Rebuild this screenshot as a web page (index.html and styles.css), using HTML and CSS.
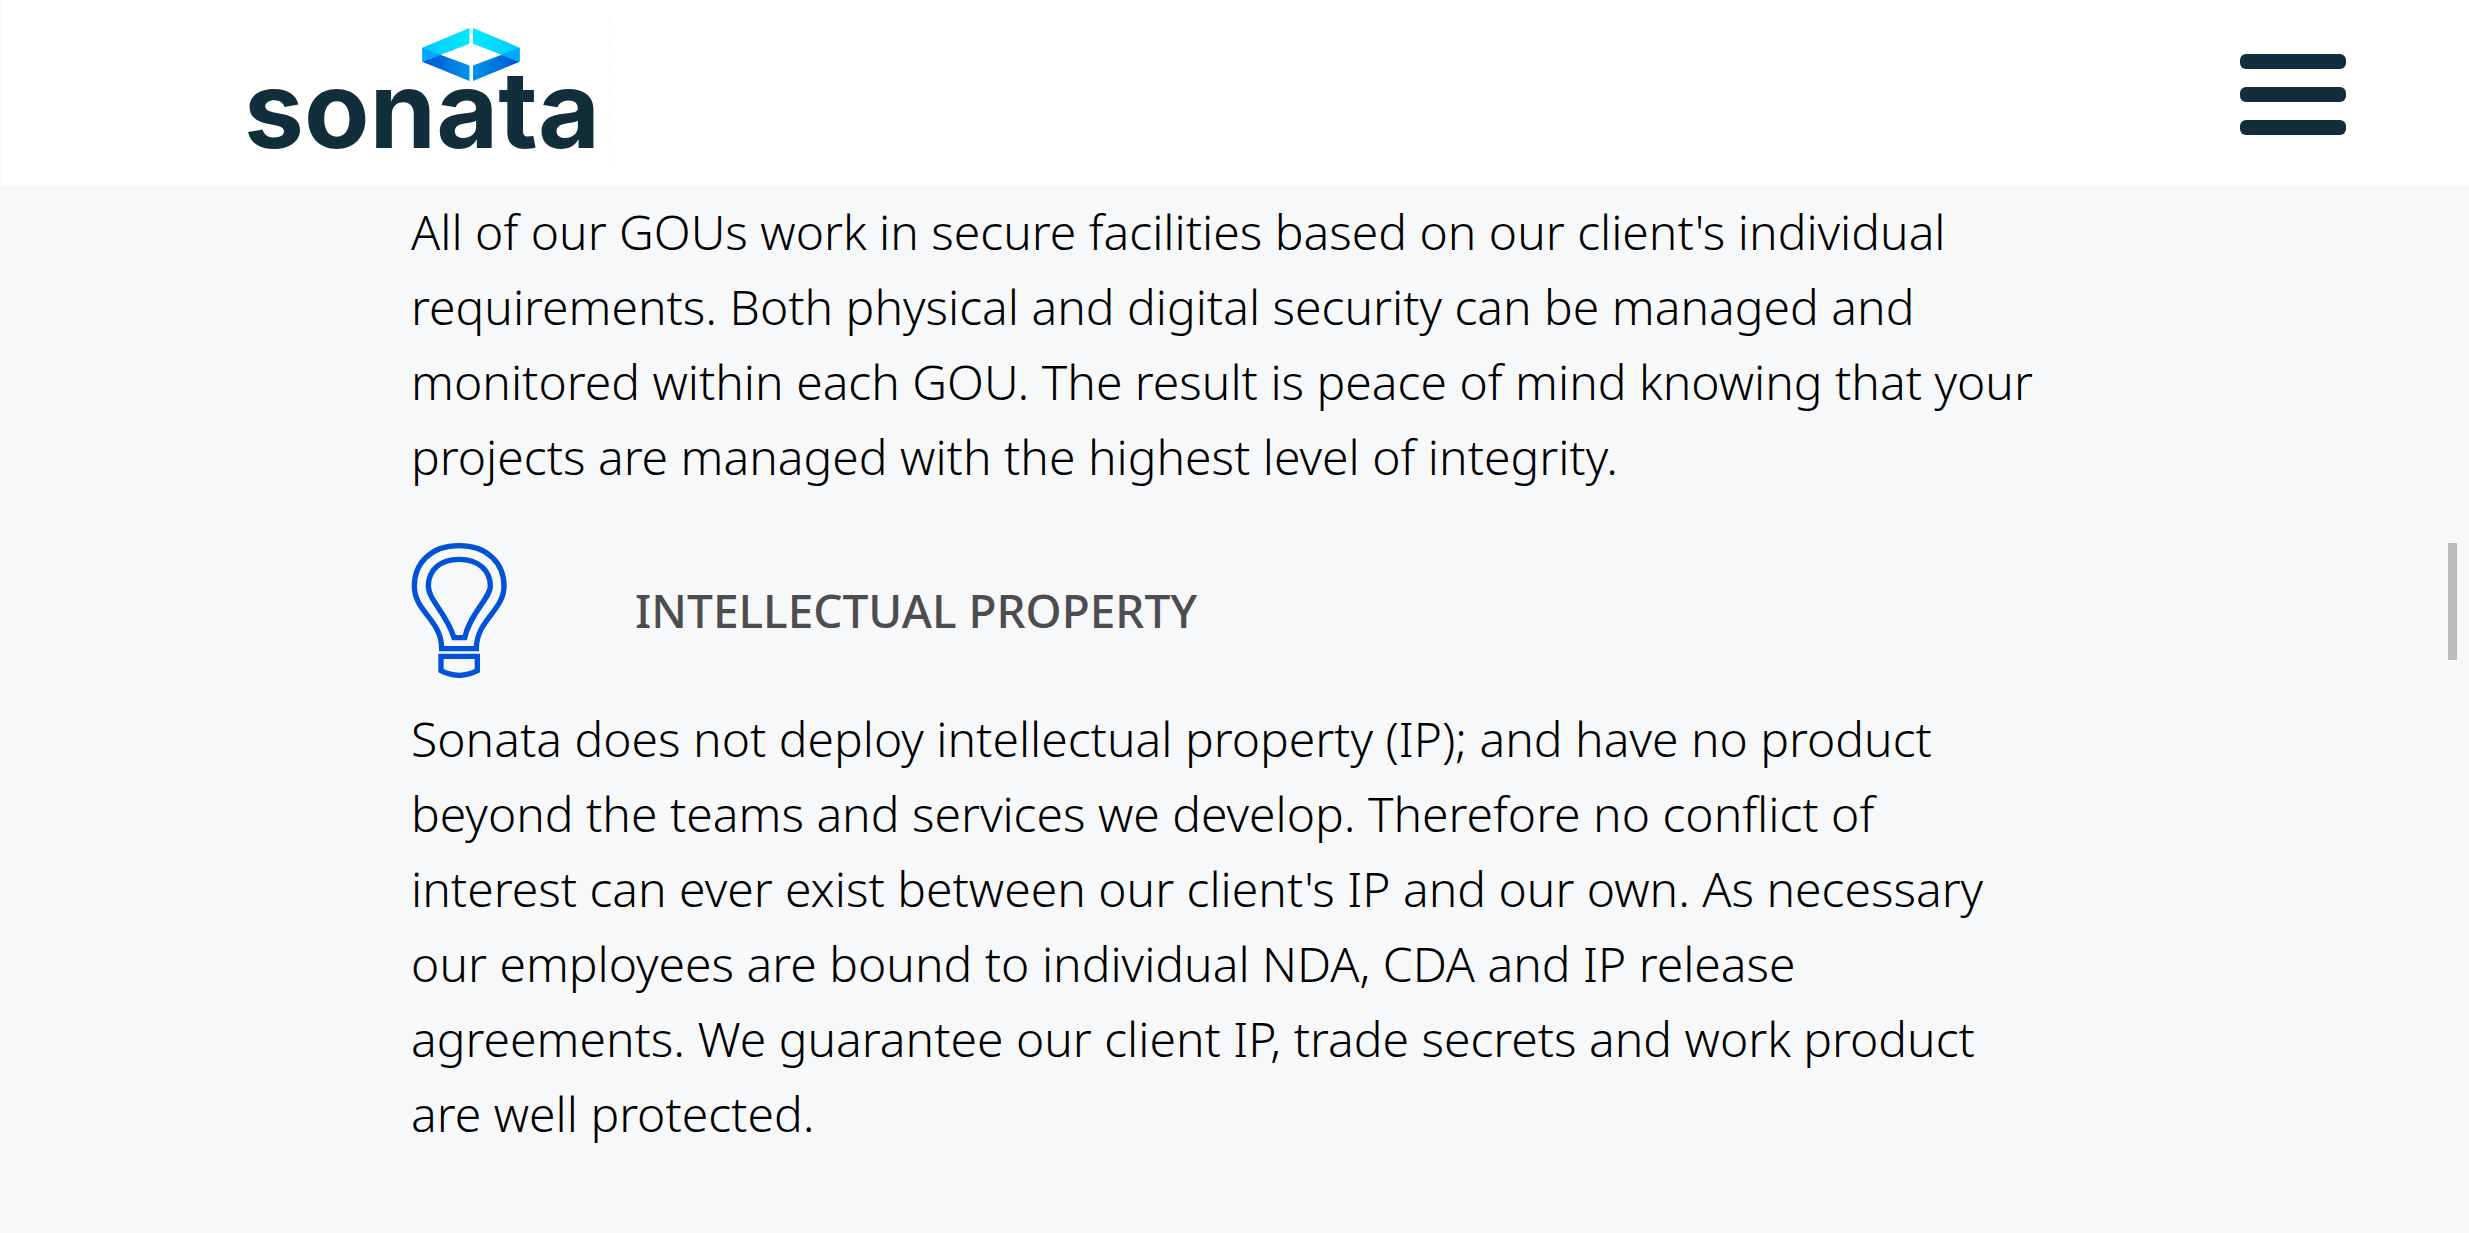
FILE: index.html
```
<!DOCTYPE html>
<html lang="en">
<head>
<meta charset="utf-8">
<meta name="viewport" content="width=device-width, initial-scale=1">
<title>Sonata – Security and Intellectual Property</title>
<link rel="stylesheet" href="styles.css">
</head>
<body>
<header class="site-header">
  <a class="logo" href="#" aria-label="Sonata home">
    <svg class="logo-art" viewBox="238 16 374 156" role="img" aria-label="sonata">
      <defs>
        <linearGradient id="top-left" x1="0" x2="1"><stop offset="0" stop-color="#00c8ff"/><stop offset="1" stop-color="#00eaff"/></linearGradient>
        <linearGradient id="top-right" x1="1" x2="0"><stop offset="0" stop-color="#00c8ff"/><stop offset="1" stop-color="#00eaff"/></linearGradient>
        <linearGradient id="low-left" x1="0" x2="1"><stop offset="0" stop-color="#0052d6"/><stop offset="1" stop-color="#0095e8"/></linearGradient>
        <linearGradient id="low-right" x1="1" x2="0"><stop offset="0" stop-color="#0052d6"/><stop offset="1" stop-color="#0095e8"/></linearGradient>
      </defs>
      <path fill="url(#top-left)" d="M469.500 28V43.700L422.300 61.700V47.700Z"/>
      <path fill="url(#low-left)" d="M422.300 61.700L440.300 54.700L469.500 65.500V81Z"/>
      <path fill="#00a8ff" d="M422.300 47.700L440.300 54.700L422.300 61.700Z"/>
      <path fill="url(#top-right)" d="M473 28V43.700L519.700 61.700V47.700Z"/>
      <path fill="url(#low-right)" d="M519.700 61.700L501.700 54.700L473 65.500V81Z"/>
      <path fill="#00a8ff" d="M519.700 47.700L501.700 54.700L519.700 61.700Z"/>
      <text class="wordmark" x="244" y="148">sonata</text>
      <path d="M610 16V165" stroke="#f1f1f1" stroke-width="2" stroke-dasharray="1 5"/>
    </svg>
  </a>
  <button class="menu-button" type="button" aria-label="Open menu">
    <span class="menu-bar"></span>
    <span class="menu-bar"></span>
    <span class="menu-bar"></span>
  </button>
</header>
<main class="content">
  <p class="copy">All of our GOUs work in secure facilities based on our client's individual requirements. Both physical and digital security can be managed and monitored within each GOU. The result is peace of mind knowing that your projects are managed with the highest level of integrity.</p>
  <div class="topic">
    <svg class="topic-icon" viewBox="63 69 288 405" aria-hidden="true">
      <path d="M155 386C155 298 73 276 73 198C73 130 122 77 207 77C293 77 342 130 342 198C342 272 259 300 259 386Z"/>
      <path d="M192 353C170 280 115 240 115 198C115 150 150 118 207 118C265 118 301 150 301 198C301 234 240 280 224 353Z"/>
      <path d="M153 409H262V452Q207 480 153 452Z"/>
    </svg>
    <h2 class="topic-title">INTELLECTUAL PROPERTY</h2>
  </div>
  <p class="copy">Sonata does not deploy intellectual property (IP); and have no product beyond the teams and services we develop. Therefore no conflict of interest can ever exist between our client's IP and our own. As necessary our employees are bound to individual NDA, CDA and IP release agreements. We guarantee our client IP, trade secrets and work product are well protected.</p>
</main>
<div class="scroll-thumb" aria-hidden="true"></div>
</body>
</html>
```
FILE: styles.css
```
* {
  box-sizing: border-box;
}

body {
  margin: 0;
  background: #f7f8fa;
  color: #000;
  font-family: "Noto Sans", "Open Sans", sans-serif;
  font-weight: 300;
}

.site-header {
  display: flex;
  align-items: center;
  justify-content: space-between;
  padding: 16px 5% 14px 9.6%;
  background: #fff;
  border-left: 1px solid #f7f8fa;
}

.logo,
.logo-art {
  display: block;
}

.logo-art {
  width: 374px;
  height: 156px;
}

.wordmark {
  fill: #122e3a;
  font-family: "Inter", sans-serif;
  font-size: 107px;
  font-weight: 700;
}

.menu-button {
  display: flex;
  flex-direction: column;
  gap: 18px;
  width: 106px;
  padding: 0;
  border: 0;
  background: none;
  cursor: pointer;
}

.menu-bar {
  height: 15px;
  border-radius: 6px;
  background: #122e3a;
}

.content {
  padding: 8px 17.2% 80px 16.65%;
}

.copy {
  margin: 0;
  font-size: 48px;
  line-height: 75px;
}

.topic {
  display: flex;
  align-items: center;
  gap: 128px;
  margin: 49px 0 23px;
}

.topic-icon {
  width: 96px;
  height: 135px;
  fill: none;
  stroke: #0052d9;
  stroke-width: 16px;
}

.topic-title {
  margin: 0;
  color: #4d4d4f;
  font-size: 46px;
  font-weight: 500;
  line-height: 75px;
}

.scroll-thumb {
  position: fixed;
  top: 44%;
  right: 12px;
  width: 9px;
  height: 117px;
  background: #babcba;
}
```
